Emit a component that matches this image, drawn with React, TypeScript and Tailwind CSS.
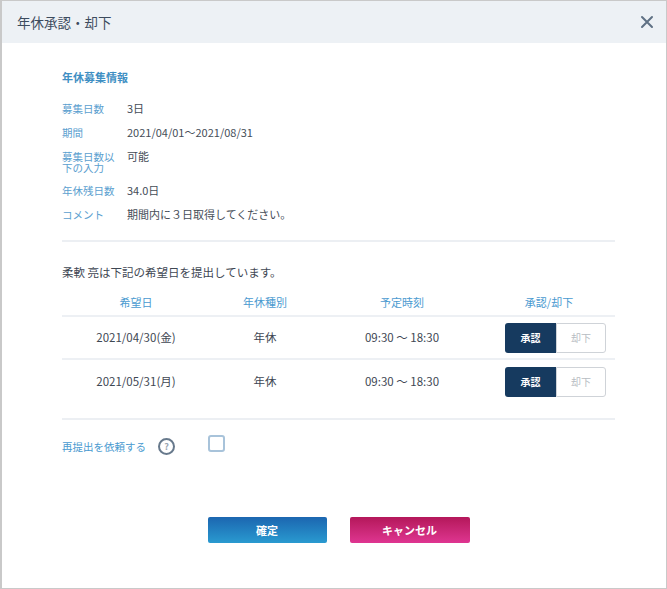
import React from 'react';

const INFO = [
  { label: '募集日数', value: '3日' },
  { label: '期間', value: '2021/04/01～2021/08/31' },
  { label: '募集日数以下の入力', value: '可能' },
  { label: '年休残日数', value: '34.0日' },
  { label: 'コメント', value: '期間内に３日取得してください。' },
];

const ROWS = [
  { date: '2021/04/30(金)', kind: '年休', time: '09:30 ～ 18:30' },
  { date: '2021/05/31(月)', kind: '年休', time: '09:30 ～ 18:30' },
];

const font = { fontFamily: '"Noto Sans CJK JP", "Noto Sans", sans-serif' };

export default function App() {
  return (
    <div className="w-[667px] h-[589px] bg-white border border-[#c9c9c9] border-l-2 flex flex-col" style={font}>
      <div className="h-[42px] shrink-0 bg-[#edf1f5] flex items-center justify-between pl-[15px] pr-[12px]">
        <span className="text-[13.5px] text-[#3d4c5e]">年休承認・却下</span>
        <svg width="14" height="14" viewBox="0 0 14 14" className="text-[#5f7184]">
          <path d="M2 2 L12 12 M12 2 L2 12" stroke="currentColor" strokeWidth="2" strokeLinecap="round" />
        </svg>
      </div>

      <div className="pl-[60px] pr-[51px] pt-[26px] flex flex-col">
        <div className="text-[11px] font-bold text-[#3f8fc3] leading-[16px]">年休募集情報</div>

        <div className="mt-[16px] flex flex-col gap-[10px]">
          {INFO.map(r => (
            <div key={r.label} className="flex items-start text-[11px] leading-[14px]">
              <div className="w-[56px] text-[10.5px] text-[#5ba0cf] leading-[11px] pt-[2px] break-all">{r.label}</div>
              <div className="ml-[9px] text-[#454d57]">{r.value}</div>
            </div>
          ))}
        </div>

        <div className="mt-[19px] h-[2px] bg-[#eceff3]" />

        <div className="mt-[22px] text-[11.5px] text-[#3e4753] leading-[16px]">柔軟 亮は下記の希望日を提出しています。</div>

        <div className="mt-[14px]">
          <div className="grid grid-cols-[148px_110px_164px_130px] text-[11px] text-[#4a9ad0] h-[23px] items-start border-b-2 border-[#edf0f4]">
            <div className="text-center">希望日</div>
            <div className="text-center">年休種別</div>
            <div className="text-center">予定時刻</div>
            <div className="text-center">承認/却下</div>
          </div>
          {ROWS.map((r, i) => (
            <div
              key={r.date}
              className={`grid grid-cols-[148px_110px_164px_130px] text-[11.5px] text-[#3e4753] h-[43px] items-center ${i === 0 ? 'border-b-2 border-[#edf0f4]' : ''}`}
            >
              <div className="text-center">{r.date}</div>
              <div className="text-center">{r.kind}</div>
              <div className="text-center">{r.time}</div>
              <div className="flex justify-end pr-[8px]">
                <div className="flex h-[30px]">
                  <button className="w-[51px] bg-[#163a5f] text-white text-[10px] font-bold rounded-l-[3px]">承認</button>
                  <button className="w-[50px] bg-white border border-[#cfd3d8] text-[#b7bcc2] text-[10px] rounded-r-[3px]">却下</button>
                </div>
              </div>
            </div>
          ))}
        </div>

        <div className="mt-[15px] h-[2px] bg-[#eceff3]" />

        <div className="mt-[18px] flex items-center">
          <span className="text-[10.5px] text-[#4a9ad0]">再提出を依頼する</span>
          <span className="ml-[12px] w-[17px] h-[17px] rounded-full border-2 border-[#67798c] flex items-center justify-center text-[9px] font-bold text-[#9aa5b1] leading-none">?</span>
          <span className="ml-[33px] -mt-[7px] w-[17px] h-[17px] rounded-[3px] border-2 border-[#a8c3da] bg-white" />
        </div>

        <div className="mt-[62px] flex justify-center gap-[23px]">
          <button className="w-[119px] h-[26px] rounded-[2px] text-white text-[11px] font-bold bg-gradient-to-b from-[#1c66b0] to-[#2a9ad0]">確定</button>
          <button className="w-[120px] h-[26px] rounded-[2px] text-white text-[11px] font-bold bg-gradient-to-b from-[#b4175a] to-[#df3591]">キャンセル</button>
        </div>
      </div>
    </div>
  );
}
